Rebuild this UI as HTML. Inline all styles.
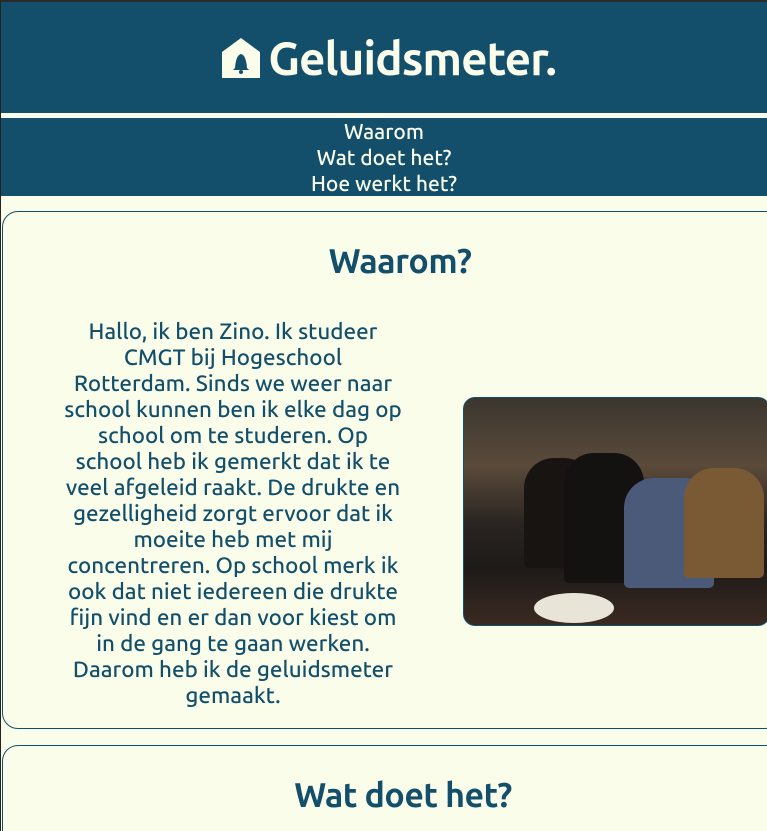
<!DOCTYPE html>
<html style="overflow:hidden;height:831px"><head><meta charset="utf-8"><style>
*{margin:0;padding:0;box-sizing:border-box}
body{width:767px;height:831px;overflow:hidden;background:#f9fdea;font-family:"Ubuntu","Liberation Sans",sans-serif;color:#134f6b;border-left:1px solid #222;border-top:2px solid #2a2a2a;position:relative}
header{background:#134f6b;height:111px;display:flex;align-items:center;justify-content:center;color:#f9fdea}
header h1{font-size:46px;font-weight:bold;letter-spacing:-1px;display:flex;align-items:center;margin-left:10px}
.line{height:5px;background:#f9fdea}
nav{background:#134f6b;height:78px;text-align:center;color:#f9fdea;font-size:21px;font-weight:500;line-height:26px}
.card{position:absolute;left:1px;width:780px;border:1.5px solid #134f6b;border-radius:16px;background:#f9fdea}
.c1{top:209px;height:518px}
.c2{top:743px;height:86px;border-bottom:none;border-radius:16px 16px 0 0}
h2{text-align:center;font-size:34px;font-weight:bold;letter-spacing:-0.5px}
.txt{position:absolute;left:20px;width:420px;top:107px;text-align:center;font-size:22.4px;font-weight:500;line-height:26px;white-space:nowrap}
.img{position:absolute;left:460px;top:185px;width:307px;height:229px;border:1.5px solid #134f6b;border-radius:12px;overflow:hidden;background:linear-gradient(180deg,#3b3630 0%,#5a4a3a 30%,#2a2522 55%,#1e1a18 75%,#3a2a22 100%)}
</style></head><body>
<header><h1><svg width="38" height="40" viewBox="0 0 38 40" style="margin-right:8px"><path d="M0 14 L19 0 L38 14 L38 40 L0 40 Z" fill="#f9fdea"/><path d="M13 30 Q14 17 19 16 Q24 17 25 30 L27 32 L11 32 Z" fill="#134f6b"/><circle cx="19" cy="34" r="2" fill="#134f6b"/></svg>Geluidsmeter.</h1></header>
<div class="line"></div>
<nav>Waarom<br>Wat doet het?<br>Hoe werkt het?</nav>
<div class="card c1">
<h2 style="margin-top:30px;margin-left:16px">Waarom?</h2>
<div class="txt">Hallo, ik ben Zino. Ik studeer<br>CMGT bij Hogeschool<br>Rotterdam. Sinds we weer naar<br>school kunnen ben ik elke dag op<br>school om te studeren. Op<br>school heb ik gemerkt dat ik te<br>veel afgeleid raakt. De drukte en<br>gezelligheid zorgt ervoor dat ik<br>moeite heb met mij<br>concentreren. Op school merk ik<br>ook dat niet iedereen die drukte<br>fijn vind en er dan voor kiest om<br>in de gang te gaan werken.<br>Daarom heb ik de geluidsmeter<br>gemaakt.</div>
<div class="img">
<div style="position:absolute;left:60px;top:60px;width:70px;height:110px;background:#181412;border-radius:30px 30px 5px 5px"></div>
<div style="position:absolute;left:100px;top:55px;width:80px;height:130px;background:#141210;border-radius:30px 30px 5px 5px"></div>
<div style="position:absolute;left:160px;top:80px;width:90px;height:110px;background:#4a5a78;border-radius:30px 30px 5px 5px"></div>
<div style="position:absolute;left:220px;top:70px;width:80px;height:110px;background:#7a5a35;border-radius:30px 30px 5px 5px"></div>
<div style="position:absolute;left:70px;top:195px;width:80px;height:30px;background:#e8e4d8;border-radius:50%"></div>
</div>
</div>
<div class="card c2"><h2 style="margin-top:30px;margin-left:22px">Wat doet het?</h2></div>
</body></html>
